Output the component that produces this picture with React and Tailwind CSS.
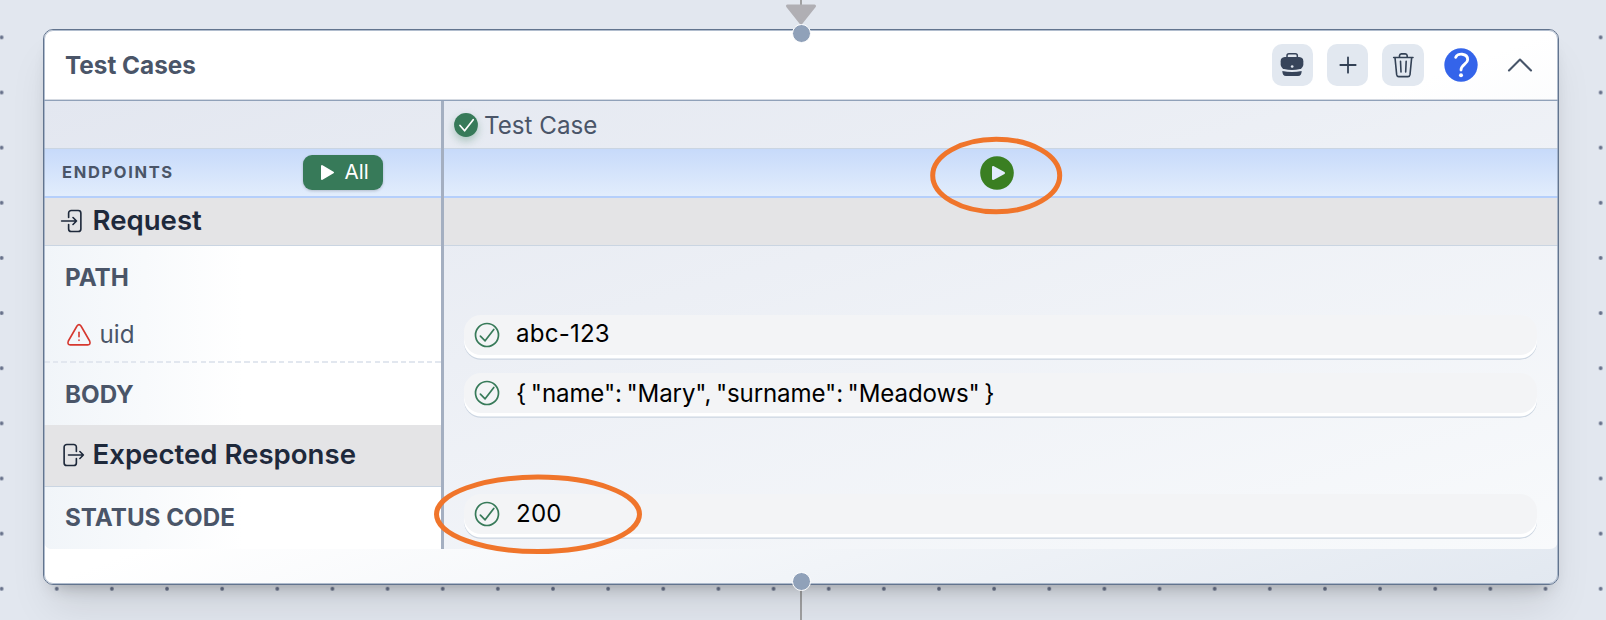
import React from "react";

const GREEN = "#377a59";

function CheckOutline() {
  return (
    <svg className="size-[26px] shrink-0" viewBox="-13 -13 26 26" fill="none" stroke={GREEN} strokeWidth="1.7" strokeLinecap="round" strokeLinejoin="round">
      <circle r="11.5" />
      <path d="M-6.6 1.2L-1.9 5.8L6.8-5.6" />
    </svg>
  );
}

function CheckSolid() {
  return (
    <svg className="size-[26px] shrink-0 drop-shadow-[0_4px_4px_rgba(55,122,89,0.35)]" viewBox="-13 -13 26 26" fill="none">
      <circle r="11.9" fill={GREEN} />
      <path d="M-6 0.5L-1.4 5.8L7.2-5.3" stroke="#fff" strokeWidth="1.7" strokeLinecap="round" strokeLinejoin="round" />
    </svg>
  );
}

function BriefcaseIcon() {
  return (
    <svg className="size-6" viewBox="0 0 72 72" fill="none">
      <path d="M21 14V8Q21 2.500 27 2.500H46Q52 2.500 52 8V14" stroke="#37445a" strokeWidth="4.500" />
      <path d="M14 12H58Q70 13 70 25V34Q70 44 60 48Q48 51 36 51Q24 51 12 48Q2 44 2 34V25Q2 13 14 12Z" fill="#37445a" />
      <path d="M7 54Q36 60 65 54Q65 69 54 69H18Q7 69 7 54Z" fill="#37445a" />
      <circle cx="36.500" cy="40.500" r="4" fill="#e2e8f0" />
    </svg>
  );
}

function PlusIcon() {
  return (
    <svg className="size-6" viewBox="0 0 72 72" fill="none" stroke="#334155" strokeWidth="5.400" strokeLinecap="round">
      <path d="M36 13V59M13 36H59" />
    </svg>
  );
}

function TrashIcon() {
  return (
    <svg className="size-6 overflow-visible" viewBox="0 0 72 72" fill="none" stroke="#334155" strokeWidth="4.800" strokeLinecap="round" strokeLinejoin="round">
      <path d="M8 13.500H66M25.500 13V8Q26 2.500 31 2.500H43Q48 2.500 48.500 8V13M12 14L17 65Q18 71 23 71H51Q56 71 57 65L62 14M28.500 25L30 57M45.500 25L44 57" />
    </svg>
  );
}

function HelpIcon() {
  return (
    <svg className="size-[34px]" viewBox="-51 -51 102 102" fill="none">
      <circle r="50" fill="#3464ea" />
      <path d="M-16-23C-12-36 20-37 20-16C20-3 0-2 0 15" stroke="#fff" strokeWidth="8.500" strokeLinecap="round" />
      <circle cy="31" r="6" fill="#fff" />
    </svg>
  );
}

function ChevronUp() {
  return (
    <svg className="h-[14px] w-[26px]" viewBox="0 0 26 14" fill="none" stroke="#475569" strokeWidth="2.100" strokeLinecap="round" strokeLinejoin="round">
      <path d="M2 12.500L13 1.500L24 12.500" />
    </svg>
  );
}

function EnterIcon() {
  return (
    <svg className="size-7 shrink-0" viewBox="0 0 24 24" fill="none" stroke="#1e293b" strokeWidth="1.400" strokeLinecap="round" strokeLinejoin="round">
      <path d="M8.250 9V5.250A2.250 2.250 0 0 1 10.500 3h6a2.250 2.250 0 0 1 2.250 2.250v13.500A2.250 2.250 0 0 1 16.500 21h-6a2.250 2.250 0 0 1-2.250-2.250V15M12 9l3 3m0 0-3 3m3-3H2.250" />
    </svg>
  );
}

function ExitIcon() {
  return (
    <svg className="size-7 shrink-0" viewBox="0 0 24 24" fill="none" stroke="#1e293b" strokeWidth="1.400" strokeLinecap="round" strokeLinejoin="round">
      <path d="M15.750 9V5.250A2.250 2.250 0 0 0 13.500 3h-6a2.250 2.250 0 0 0-2.250 2.250v13.500A2.250 2.250 0 0 0 7.500 21h6a2.250 2.250 0 0 0 2.250-2.250V15M18.750 15l3-3m0 0-3-3m3 3H9" />
    </svg>
  );
}

function WarningIcon() {
  return (
    <svg className="h-6 w-[26px] shrink-0" viewBox="-39 -36 78 72" fill="none" stroke="#d6382f" strokeWidth="4.800" strokeLinecap="round" strokeLinejoin="round">
      <path d="M-6-27Q0-35 6-27L32 18Q36 29 26 29.500H-26Q-36 29-32 18Z" />
      <path d="M0-8V5" />
      <path d="M0 15.500V16" />
    </svg>
  );
}

function IconButton({ children }) {
  return (
    <button className="flex size-[41.4px] items-center justify-center rounded-[10px] bg-slate-200">{children}</button>
  );
}

function Pill({ children, className = "tracking-[0.2px]" }) {
  return (
    <div className="mr-[21.5px] ml-[20px] flex h-[40px] items-center rounded-[17px] bg-gray-100 pl-[9.5px] text-[24.1px] text-black shadow-[0_3.5px_0_#fff,0_4.7px_0_#cbd5e1]">
      <CheckOutline />
      <span className={"ml-[16.5px] whitespace-pre " + className}>{children}</span>
    </div>
  );
}

function Handle({ className }) {
  return (
    <span className={"absolute left-[791.5px] size-[19px] rounded-full border-[1.5px] border-white bg-slate-400 " + className} />
  );
}

export default function App() {
  return (
    <div className="relative h-[620px] w-[1606px] overflow-hidden bg-[#e2e7ef] px-[43px] pt-[29px] font-['Inter',sans-serif] text-[#4a5568]">
      <svg className="absolute inset-0 h-full w-full">
        <defs>
          <pattern id="dots" x="-26" y="9.800" width="55.140" height="55.140" patternUnits="userSpaceOnUse">
            <circle cx="27.600" cy="27.600" r="1.900" fill="#667089" />
          </pattern>
        </defs>
        <rect width="1606" height="620" fill="url(#dots)" />
        <path d="M801 0V8M801 580V620" stroke="#999" strokeWidth="1.800" />
        <path d="M787.500 6H814.500L801 23Z" fill="#b0afb4" stroke="#b0afb4" strokeWidth="3" strokeLinejoin="round" />
      </svg>

      <section className="relative flex h-[556px] w-[1516px] flex-col overflow-hidden rounded-[10px] border border-slate-500 bg-linear-to-br from-white via-white to-slate-200 shadow-[0_27.6px_41px_-8px_rgba(0,0,0,0.1),0_11px_16.5px_-11px_rgba(0,0,0,0.3)]">
        <header className="flex h-[71px] shrink-0 items-center border-b border-slate-400 pr-[25.5px] pl-[21px] shadow-[inset_0_-1px_0_#d5dae2]">
          <h1 className="pt-[1px] text-[24.3px] font-[670]">Test Cases</h1>
          <div className="ml-auto flex items-center gap-[13.8px]">
            <IconButton><BriefcaseIcon /></IconButton>
            <IconButton><PlusIcon /></IconButton>
            <IconButton><TrashIcon /></IconButton>
          </div>
          <div className="ml-[20.5px] flex items-center gap-[28.5px]">
            <HelpIcon />
            <ChevronUp />
          </div>
        </header>

        <div className="flex h-[448px] shrink-0 overflow-hidden rounded-b-[8px] bg-linear-to-br from-[#e3e7f0] to-slate-50">
          <div className="flex w-[400px] shrink-0 flex-col border-r-[3px] border-[#a4afc1]">
            <div className="h-[48px] shrink-0 border-b border-slate-300" />
            <div className="flex h-[49px] shrink-0 items-center border-b-2 border-[#b5cffb] bg-linear-to-b from-[#c7dafa] to-[#e2edfc] pl-[18px]">
              <span className="w-[241px] text-[16.5px] font-bold tracking-[1.65px]">ENDPOINTS</span>
              <button className="flex h-[35px] w-[79.5px] items-center rounded-[9px] bg-[#377a59] pl-[17px] text-[20.6px] text-white shadow-[0_1px_3px_rgba(0,0,0,0.2)]">
                <svg className="h-[17px] w-[15px]" viewBox="0 0 15 17"><path d="M2 2V15L13 8.500Z" fill="#fff" stroke="#fff" strokeWidth="2" strokeLinejoin="round" /></svg>
                <span className="ml-[9.500px]">All</span>
              </button>
            </div>
            <div className="flex h-[48px] shrink-0 items-center border-b border-slate-300 bg-[#e4e4e6] pb-[1px] pl-[14.5px] text-[27.6px] font-[630] text-[#1e293b]">
              <EnterIcon /><span className="ml-[6px]">Request</span>
            </div>
            <div className="flex h-[117px] shrink-0 flex-col bg-linear-to-r from-slate-100 to-white to-50% text-[24.2px]">
              <div className="flex h-[64px] shrink-0 items-center pl-[21px] font-[670]">PATH</div>
              <div className="flex h-[51px] shrink-0 items-center pb-[1px] pl-[22px]"><WarningIcon /><span className="ml-[7.500px]">uid</span></div>
              <div className="h-[2px] shrink-0 bg-[repeating-linear-gradient(90deg,#e2e7ef_0_5.500px,transparent_5.500px_8.700px)]" />
            </div>
            <div className="flex h-[62px] shrink-0 items-center bg-linear-to-r from-slate-100 to-white to-50% pt-[2px] pl-[21px] text-[24.2px] font-[670]">BODY</div>
            <div className="flex h-[62px] shrink-0 items-center border-b border-slate-300 bg-[#e4e4e6] pb-[1px] pl-[14px] text-[27.6px] font-[630] text-[#1e293b]">
              <ExitIcon /><span className="ml-[6.500px]">Expected Response</span>
            </div>
            <div className="flex grow items-center bg-linear-to-r from-slate-100 to-white to-50% pl-[21px] text-[24.2px] font-[670]">STATUS CODE</div>
          </div>

          <div className="flex grow flex-col">
            <div className="flex h-[48px] shrink-0 items-center border-b border-slate-300 pl-[8.500px] text-[24.2px]">
              <CheckSolid /><span className="ml-[5.500px] pt-[2.500px]">Test Case</span>
            </div>
            <div className="flex h-[49px] shrink-0 items-center justify-center border-b-2 border-[#b5cffb] bg-linear-to-b from-[#c7dafa] to-[#e2edfc] pr-[9px]">
              <svg className="size-[34px]" viewBox="-17 -17 34 34">
                <circle r="16.800" fill="#3a7f22" />
                <path d="M-4-6V6L7 0Z" fill="#e2edfc" stroke="#e2edfc" strokeWidth="2" strokeLinejoin="round" />
              </svg>
            </div>
            <div className="h-[48px] shrink-0 border-b border-slate-300 bg-[#e4e4e6]" />
            <div className="flex flex-col pt-[68.500px]">
              <Pill>abc-123</Pill>
              <div className="h-[18.700px]" />
              <Pill className="pt-[1.500px] tracking-[-0.13px] [word-spacing:-2px]">{'{ "name": "Mary", "surname": "Meadows" }'}</Pill>
              <div className="h-[80.700px]" />
              <Pill>200</Pill>
            </div>
          </div>
        </div>
        <div className="pointer-events-none absolute inset-0 rounded-[9px] border border-slate-400/70" />
      </section>

      <Handle className="top-[23.500px]" />
      <Handle className="top-[571.500px]" />
      <svg className="pointer-events-none absolute inset-0 h-full w-full" fill="none" stroke="#f0752b" strokeWidth="5">
        <ellipse cx="996.200" cy="175.500" rx="63.500" ry="36.300" />
        <ellipse cx="538" cy="514.300" rx="101.500" ry="37.200" />
      </svg>
    </div>
  );
}
